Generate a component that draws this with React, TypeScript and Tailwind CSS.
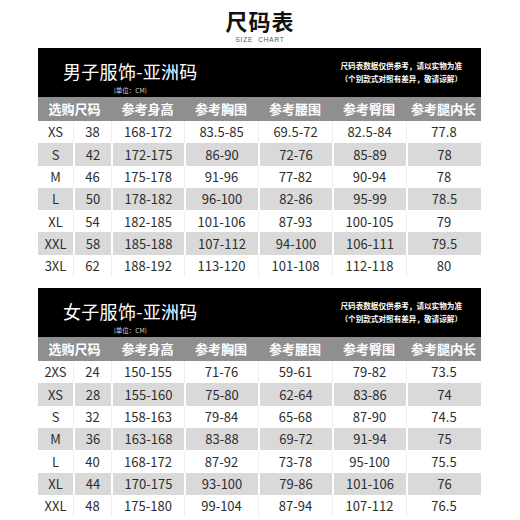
import React from "react";

const FONT = { fontFamily: '"Noto Sans CJK SC", "Noto Sans", sans-serif' };

const headers = ["参考身高", "参考胸围", "参考腰围", "参考臀围", "参考腿内长"];

const men = [
  ["XS", "38", "168-172", "83.5-85", "69.5-72", "82.5-84", "77.8"],
  ["S", "42", "172-175", "86-90", "72-76", "85-89", "78"],
  ["M", "46", "175-178", "91-96", "77-82", "90-94", "78"],
  ["L", "50", "178-182", "96-100", "82-86", "95-99", "78.5"],
  ["XL", "54", "182-185", "101-106", "87-93", "100-105", "79"],
  ["XXL", "58", "185-188", "107-112", "94-100", "106-111", "79.5"],
  ["3XL", "62", "188-192", "113-120", "101-108", "112-118", "80"],
];

const women = [
  ["2XS", "24", "150-155", "71-76", "59-61", "79-82", "73.5"],
  ["XS", "28", "155-160", "75-80", "62-64", "83-86", "74"],
  ["S", "32", "158-163", "79-84", "65-68", "87-90", "74.5"],
  ["M", "36", "163-168", "83-88", "69-72", "91-94", "75"],
  ["L", "40", "168-172", "87-92", "73-78", "95-100", "75.5"],
  ["XL", "44", "170-175", "93-100", "79-86", "101-106", "76"],
  ["XXL", "48", "175-180", "99-104", "87-94", "107-112", "76.5"],
];

function Section({ title, rows }: { title: string; rows: string[][] }) {
  return (
    <div className="w-[443px] ml-[38px]">
      <div className="h-[49px] bg-black flex justify-between items-start text-white">
        <div className="flex flex-col items-center ml-[25px]">
          <div className="text-[18px] leading-[22px] mt-[12px] tracking-[0.3px]">{title}</div>
          <div className="text-[6.5px] leading-[8px] mt-[4px] text-[#dddddd]">(单位：CM)</div>
        </div>
        <div className="flex flex-col items-end pr-[19px] pt-[11px] text-[7.6px] leading-[13px] font-bold">
          <div>尺码表数据仅供参考，请以实物为准</div>
          <div>（个别款式对照有差异，敬请谅解）</div>
        </div>
      </div>
      <div className="grid grid-cols-[73px_73px_74px_74px_74px_75px] h-[24px] bg-[#8f8f8f] text-white font-bold text-[13px] items-center text-center">
        <div>选购尺码</div>
        {headers.map((h) => (
          <div key={h}>{h}</div>
        ))}
      </div>
      {rows.map((r, i) => {
        const grey = i % 2 === 1;
        return (
          <div
            key={i}
            className={
              grey
                ? "grid grid-cols-[35px_38px_73px_74px_74px_74px_75px] h-[22.3px] bg-[#d9d9d9] text-[#2e2e2e] text-[13px]"
                : "grid grid-cols-[35px_38px_73px_74px_74px_74px_75px] h-[22.3px] bg-white text-[#2e2e2e] text-[13px]"
            }
          >
            {r.map((c, j) => (
              <div
                key={j}
                className={
                  j === 0
                    ? "flex items-center justify-center"
                    : grey
                    ? "flex items-center justify-center border-l-2 border-white"
                    : "flex items-center justify-center border-l border-[#efefef]"
                }
              >
                {c}
              </div>
            ))}
          </div>
        );
      })}
    </div>
  );
}

export default function App() {
  return (
    <div className="w-[520px] h-[520px] bg-white overflow-hidden" style={FONT}>
      <div className="h-[48px] flex flex-col items-center">
        <div className="text-[22px] leading-[26px] mt-[7px] font-bold text-[#111111] tracking-[1px]">尺码表</div>
        <div className="text-[6.5px] leading-[8px] mt-[3px] text-[#555555] tracking-[0.8px]" style={{ fontFamily: '"Liberation Sans", sans-serif' }}>
          SIZE&nbsp;&nbsp;CHART
        </div>
      </div>
      <Section title="男子服饰-亚洲码" rows={men} />
      <div className="h-[11px]" />
      <Section title="女子服饰-亚洲码" rows={women} />
    </div>
  );
}
